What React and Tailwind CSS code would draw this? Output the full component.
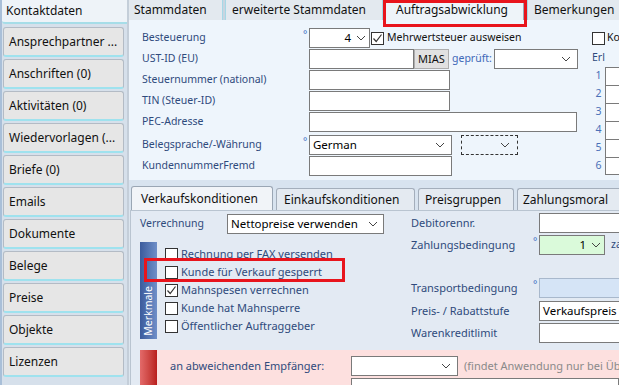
import React from "react";

const Chevron = () => (
  <svg width="10" height="6" viewBox="0 0 10 6" className="shrink-0">
    <path d="M1 1 L5 5 L9 1" fill="none" stroke="#444" strokeWidth="1" />
  </svg>
);

const Check = () => (
  <svg width="11" height="11" viewBox="0 0 11 11">
    <path d="M1.5 5.5 L4.2 8.5 L9.5 1.5" fill="none" stroke="#333" strokeWidth="1.2" />
  </svg>
);

function Box({ checked }) {
  return (
    <div className="w-[13px] h-[13px] border border-[#333] bg-white flex items-center justify-center shrink-0">
      {checked && <Check />}
    </div>
  );
}

function Field({ className, children }) {
  return (
    <div className={`h-[20px] border border-[#7a7a7a] flex items-center px-[3px] text-[11.5px] text-black shrink-0 ${className}`}>
      {children}
    </div>
  );
}

const Deg = () => <span className="w-[6px] shrink-0 self-start text-[10px] leading-[12px] text-[#3d6fc4]">°</span>;

const side = [
  "Ansprechpartner ...",
  "Anschriften (0)",
  "Aktivitäten (0)",
  "Wiedervorlagen (...",
  "Briefe (0)",
  "Emails",
  "Dokumente",
  "Belege",
  "Preise",
  "Objekte",
  "Lizenzen",
];

export default function App() {
  const lbl = "text-[10.5px] text-[#2f4a7c] shrink-0";
  return (
    <div className="relative w-[619px] h-[385px] overflow-hidden flex bg-[#dde6ef] font-['Noto_Sans',sans-serif]">
      {/* Sidebar */}
      <div className="w-[127px] shrink-0 flex flex-col bg-[#d6e0eb] border-l-2 border-[#a9bfd8]">
        <div className="h-[24px] bg-[#eef3f8] border-b-2 border-[#a6dde8] pl-[4px] flex items-center text-[12px] text-[#111] rounded-bl-[3px]">
          Kontaktdaten
        </div>
        <div className="flex flex-col gap-[2px] pt-[3px] pl-[1px] pr-[3px]">
          {side.map((s) => (
            <div
              key={s}
              className="h-[30px] rounded-[3px] border border-[#b3bbc5] border-b-2 border-b-[#9fe2ee] bg-[#e6e6e6] flex items-center pl-[5px] text-[12px] text-[#111] whitespace-nowrap"
            >
              {s}
            </div>
          ))}
        </div>
      </div>

      {/* Main */}
      <div className="flex-1 flex flex-col border-l-2 border-[#c4ced9] min-w-0">
        {/* Top tabs */}
        <div className="h-[20px] flex bg-[#dfe6ee] text-[12px] text-[#111] whitespace-nowrap">
          <div className="w-[93px] pl-[5px] flex items-center bg-[#e3e9ef]">Stammdaten</div>
          <div className="w-[4px] border-x border-[#a6d8e6] bg-[#c9d5e0]" />
          <div className="w-[156px] pl-[6px] flex items-center bg-[#e3e9ef]">erweiterte Stammdaten</div>
          <div className="w-[4px] border-x border-[#a6d8e6] bg-[#c9d5e0]" />
          <div className="w-[138px] pl-[10px] flex items-center bg-[#eef4f9] border-r border-[#9aa8b8]">Auftragsabwicklung</div>
          <div className="w-[4px] border-r border-[#a6d8e6] bg-[#c9d5e0]" />
          <div className="flex-1 pl-[6px] flex items-center bg-[#e3e9ef]">Bemerkungen</div>
        </div>

        {/* Upper panel */}
        <div className="h-[160px] bg-[#eef5fc] flex overflow-hidden">
          <div className="w-[463px] shrink-0 pl-[13px] pt-[8px] flex flex-col gap-[1px]">
            <div className="h-[20px] flex items-center">
              <span className={`${lbl} w-[161px]`}>Besteuerung</span>
              <Deg />
              <Field className="w-[61px] bg-white justify-end gap-[5px]">
                <span>4</span>
                <Chevron />
              </Field>
              <div className="ml-[1px]"><Box checked /></div>
              <span className="ml-[3px] text-[10.5px] text-[#111]">Mehrwertsteuer ausweisen</span>
            </div>
            <div className="h-[20px] flex items-center">
              <span className={`${lbl} w-[167px]`}>UST-ID (EU)</span>
              <Field className="w-[105px] bg-white" />
              <div className="h-[20px] w-[35px] border border-[#adadad] bg-[#e1e1e1] flex items-center justify-center text-[11px] text-[#111]">MIAS</div>
              <span className="ml-[3px] w-[42px] text-[10.5px] text-[#4068b8]">geprüft:</span>
              <Field className="w-[84px] bg-white justify-end pr-[6px]">
                <Chevron />
              </Field>
            </div>
            <div className="h-[20px] flex items-center">
              <span className={`${lbl} w-[167px]`}>Steuernummer (national)</span>
              <Field className="w-[141px] bg-white" />
            </div>
            <div className="h-[20px] flex items-center">
              <span className={`${lbl} w-[167px]`}>TIN (Steuer-ID)</span>
              <Field className="w-[141px] bg-white" />
            </div>
            <div className="h-[20px] flex items-center">
              <span className={`${lbl} w-[167px]`}>PEC-Adresse</span>
              <Field className="w-[268px] bg-white" />
            </div>
            <div className="h-[20px] flex items-center mt-[2px]">
              <span className={`${lbl} w-[161px]`}>Belegsprache/-Währung</span>
              <Deg />
              <Field className="w-[143px] bg-white justify-between pr-[6px]">
                <span>German</span>
                <Chevron />
              </Field>
              <div className="ml-[9px] h-[20px] w-[57px] border border-dashed border-[#333] flex items-center justify-end pr-[7px]">
                <Chevron />
              </div>
            </div>
            <div className="h-[20px] flex items-center">
              <span className={`${lbl} w-[167px]`}>KundennummerFremd</span>
              <Field className="w-[143px] bg-white" />
            </div>
          </div>

          <div className="flex-1 pt-[8px] flex flex-col">
            <div className="h-[20px] flex items-center">
              <Box />
              <span className="ml-[2px] text-[10.5px] text-[#111]">Ko</span>
            </div>
            <div className="h-[19px] flex items-center text-[10.5px] text-[#2f4a7c]">Erl</div>
            <div className="flex flex-col">
              {[1, 2, 3, 4, 5, 6].map((n) => (
                <div key={n} className="h-[18px] flex">
                  <span className="w-[13px] text-[10.5px] text-[#4a70b8] flex items-end justify-center pb-[1px]">{n}</span>
                  <div className={`flex-1 border-l border-r border-t border-[#7a7a7a] bg-white ${n === 6 ? "border-b" : ""}`} />
                </div>
              ))}
            </div>
          </div>
        </div>

        {/* Lower tabs */}
        <div className="h-[30px] pt-[6px] pl-[2px] flex items-end gap-[3px] bg-[#d8e3ef] text-[12px] text-[#111] whitespace-nowrap">
          <div className="h-[24px] w-[142px] pl-[9px] flex items-center rounded-t-[3px] border border-b-0 border-[#9aa6b4] bg-[#f1f4f8]">Verkaufskonditionen</div>
          <div className="h-[22px] w-[139px] pl-[7px] flex items-center rounded-t-[3px] border border-b-0 border-[#a4aebb] bg-[#e4eaf1]">Einkaufskonditionen</div>
          <div className="h-[22px] w-[96px] pl-[6px] flex items-center rounded-t-[3px] border border-b-0 border-[#a4aebb] bg-[#e4eaf1]">Preisgruppen</div>
          <div className="h-[22px] flex-1 pl-[5px] flex items-center rounded-tl-[3px] border border-b-0 border-r-0 border-[#a4aebb] bg-[#e4eaf1]">Zahlungsmoral</div>
        </div>

        {/* Lower panel */}
        <div className="flex-1 bg-[#e3eaf3] border-l border-t border-[#b9c4d0] ml-[1px] flex flex-col overflow-hidden">
          <div className="flex h-[139px] shrink-0">
            <div className="w-[280px] shrink-0 pl-[9px] pt-[3px] flex flex-col">
              <div className="h-[20px] flex items-center">
                <span className="w-[87px] text-[10.5px] text-[#2f4a7c]">Verrechnung</span>
                <Field className="w-[157px] bg-white justify-between pr-[5px]">
                  <span>Nettopreise verwenden</span>
                  <Chevron />
                </Field>
              </div>
              <div className="flex mt-[8px]">
                <div className="w-[17px] h-[97px] shrink-0 bg-gradient-to-r from-[#3b5b9c] to-[#6f8fc8] flex items-end justify-center pb-[3px]">
                  <span className="[writing-mode:vertical-rl] rotate-180 text-[10.5px] text-white">Merkmale</span>
                </div>
                <div className="ml-[8px] pt-[3px] flex flex-col">
                  {[
                    ["Rechnung per FAX versenden", false],
                    ["Kunde für Verkauf gesperrt", false],
                    ["Mahnspesen verrechnen", true],
                    ["Kunde hat Mahnsperre", false],
                    ["Öffentlicher Auftraggeber", false],
                  ].map(([t, c]) => (
                    <div key={t} className="h-[18px] flex items-center">
                      <Box checked={c} />
                      <span className="ml-[3px] text-[11px] text-[#2f4a7c] whitespace-nowrap">{t}</span>
                    </div>
                  ))}
                </div>
              </div>
            </div>
            <div className="flex-1 pt-[2px] flex flex-col gap-[2px]">
              <div className="h-[20px] flex items-center">
                <span className="w-[122px] text-[11px] text-[#2f4a7c]">Debitorennr.</span>
                <span className="w-[6px]" />
                <Field className="flex-1 bg-white border-r-0" />
              </div>
              <div className="h-[20px] flex items-center">
                <span className="w-[122px] text-[11px] text-[#2f4a7c]">Zahlungsbedingung</span>
                <Deg />
                <Field className="w-[66px] bg-[#dafada] justify-end gap-[5px]">
                  <span>1</span>
                  <Chevron />
                </Field>
                <span className="ml-[6px] text-[10.5px] text-[#2f4a7c]">za</span>
              </div>
              <div className="h-[20px] mt-[21px] flex items-center">
                <span className="w-[122px] text-[11px] text-[#2f4a7c] whitespace-nowrap">Transportbedingung</span>
                <Deg />
                <Field className="flex-1 bg-[#d5e4f6] border-[#a8b8cc] border-r-0" />
              </div>
              <div className="h-[20px] mt-[1px] flex items-center">
                <span className="w-[128px] text-[11px] text-[#2f4a7c]">Preis- / Rabattstufe</span>
                <Field className="flex-1 bg-white border-r-0">Verkaufspreis</Field>
              </div>
              <div className="h-[20px] flex items-center">
                <span className="w-[128px] text-[11px] text-[#2f4a7c]">Warenkreditlimit</span>
                <Field className="flex-1 bg-white border-r-0" />
              </div>
            </div>
          </div>

          {/* Pink area */}
          <div className="flex-1 ml-[9px] bg-[#fde0df] flex">
            <div className="w-[17px] shrink-0 bg-gradient-to-r from-[#e36a6a] to-[#b91c1c]" />
            <div className="flex-1 min-w-0 flex flex-col pt-[6px] overflow-hidden">
              <div className="h-[20px] flex items-center">
                <span className="ml-[13px] w-[181px] shrink-0 text-[11px] text-[#2f4a7c] whitespace-nowrap">an abweichenden Empfänger:</span>
                <Field className="w-[107px] bg-white justify-end pr-[6px]">
                  <Chevron />
                </Field>
                <span className="ml-[6px] text-[11px] text-[#8a8a8a] whitespace-nowrap">(findet Anwendung nur bei Üb</span>
              </div>
              <div className="h-[20px] mt-[2px] ml-[194px] border border-[#7a7a7a] bg-white shrink-0" />
            </div>
          </div>
        </div>
      </div>

      {/* Annotation boxes */}
      <div className="absolute left-[383px] top-0 w-[144px] h-[27px] border-[3px] border-[#e8141c]" />
      <div className="absolute left-[144px] top-[258px] w-[201px] h-[24px] border-[3px] border-[#e8141c]" />
    </div>
  );
}
